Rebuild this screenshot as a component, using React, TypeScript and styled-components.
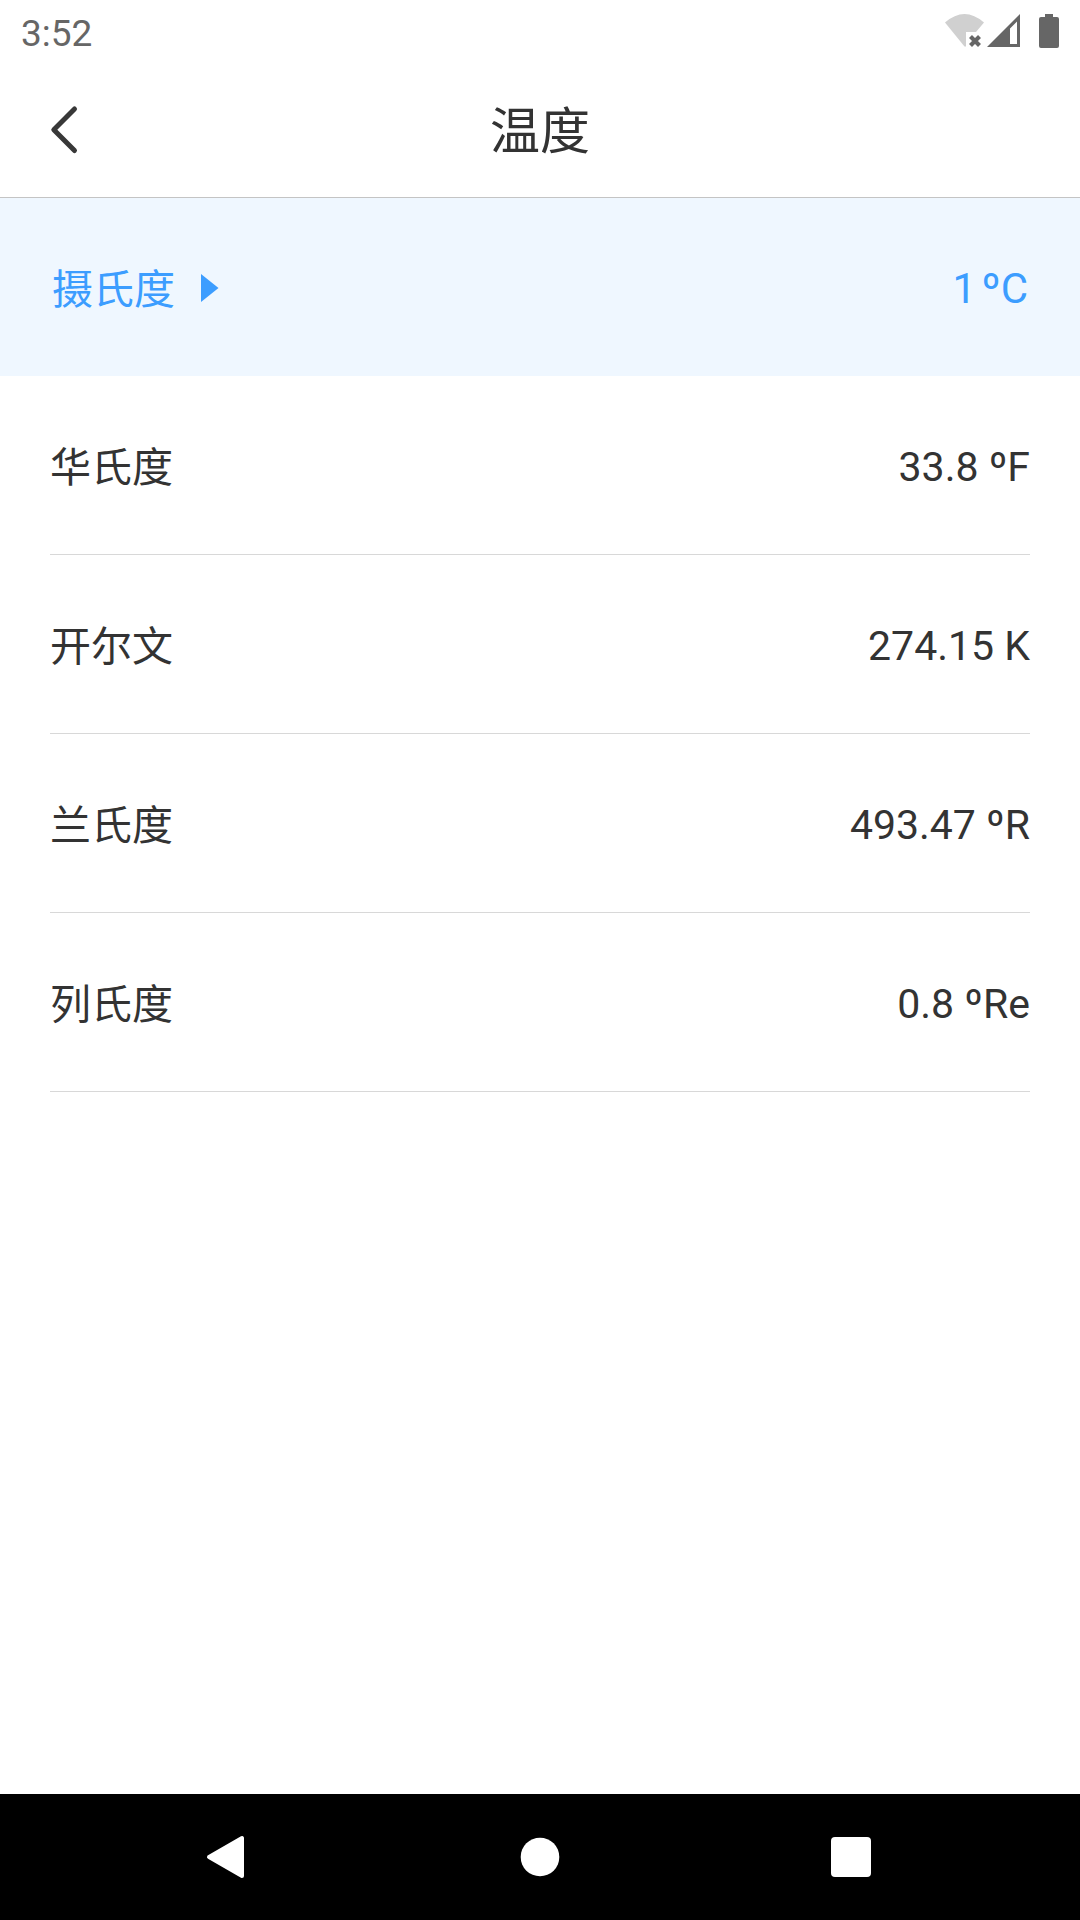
import React from "react";
import styled, { createGlobalStyle } from "styled-components";

const Global = createGlobalStyle`
  *{box-sizing:border-box}
  body{margin:0;background:#fff;font-family:Roboto,"Noto Sans CJK SC",sans-serif;color:#333}
`;
const Screen = styled.div`height:1920px;width:1080px;display:flex;flex-direction:column;`;
const StatusBar = styled.div`height:63px;display:flex;justify-content:space-between;padding:0 0 0 21px;`;
const Clock = styled.span`font-size:37px;line-height:68px;color:#666;`;
const Header = styled.header`height:135px;display:grid;grid-template-columns:130px 1fr 130px;align-items:center;border-bottom:1px solid #c4c4c4;`;
const Title = styled.h1`margin:0;padding-top:4px;font-size:50px;font-weight:400;text-align:center;line-height:72px;`;
const List = styled.main`flex:1;`;
const Row = styled.div<{ $active?: boolean }>`
  display:flex;justify-content:space-between;align-items:center;
  height:${p => (p.$active ? 178 : 179)}px;
  margin:0 ${p => (p.$active ? 0 : 50)}px;padding:0 ${p => (p.$active ? 52 : 0)}px;
  background:${p => (p.$active ? "#eff7ff" : "#fff")};
  color:${p => (p.$active ? "#3c9dff" : "#333")};
  border-bottom:${p => (p.$active ? 0 : 1)}px solid #d8d8d8;
`;
const Label = styled.span`display:flex;align-items:center;gap:26px;`;
const Name = styled.span`font-size:41px;line-height:60px;padding-top:5px;`;
const Marker = styled.svg`display:block;margin-top:1px;`;
const Value = styled.span<{ $active?: boolean }>`
  font-size:${p => (p.$active ? 42 : 41)}px;
  word-spacing:${p => (p.$active ? -5 : 0)}px;
  line-height:60px;padding-top:4px;
`;
const NavBar = styled.nav`height:126px;background:#000;`;

const rows = [
  ["摄氏度", "1 ºC"],
  ["华氏度", "33.8 ºF"],
  ["开尔文", "274.15 K"],
  ["兰氏度", "493.47 ºR"],
  ["列氏度", "0.8 ºRe"],
];

export default function App() {
  return (
    <Screen>
      <Global />
      <StatusBar>
        <Clock>3:52</Clock>
        <svg width="150" height="63" viewBox="930 0 150 63">
          <path d="M945 22.5Q964.500 5.500 984 22.500L976 32H966V46.500H964.500Z" fill="#d0d0d0" />
          <path d="M970.500 36.500L979.500 45.500M979.500 36.500L970.500 45.500" stroke="#666" strokeWidth="4.200" />
          <path fillRule="evenodd" d="M987 47L1020 14V47ZM1010 28.500V44H1017V21.500Z" fill="#666" />
          <path d="M1045 14h8v3h4q2 0 2 2v27q0 2-2 2h-16q-2 0-2-2v-27q0-2 2-2h4Z" fill="#666" />
        </svg>
      </StatusBar>
      <Header>
        <svg width="130" height="134" viewBox="0 63 130 134">
          <path d="M74.500 109L53.800 129.700L74.500 150.500" fill="none" stroke="#383838" strokeWidth="5" strokeLinecap="round" strokeLinejoin="round" />
        </svg>
        <Title>温度</Title>
      </Header>
      <List>
        {rows.map(([name, value], i) => (
          <Row key={name} $active={i === 0}>
            <Label>
              <Name>{name}</Name>
              {i === 0 && <Marker width="18" height="28"><path d="M0 0L17.500 14L0 28Z" fill="currentColor" /></Marker>}
            </Label>
            <Value $active={i === 0}>{value}</Value>
          </Row>
        ))}
      </List>
      <NavBar>
        <svg width="1080" height="126" viewBox="0 1794 1080 126" fill="#fff">
          <path d="M209 1857L242 1838V1876Z" stroke="#fff" strokeWidth="4" strokeLinejoin="round" />
          <circle cx="540" cy="1857" r="19.300" />
          <rect x="831" y="1837" width="40" height="40" rx="4" />
        </svg>
      </NavBar>
    </Screen>
  );
}
